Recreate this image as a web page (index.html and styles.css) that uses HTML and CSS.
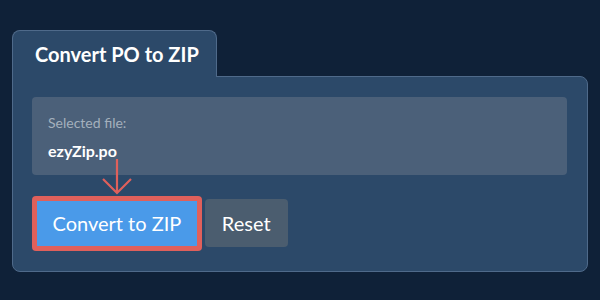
FILE: index.html
```html
<!DOCTYPE html>
<html>
<head>
<meta charset="utf-8">
<link rel="stylesheet" href="styles.css">
</head>
<body>
<div class="card">
  <div class="tab"><h1 class="tab-title">Convert PO to ZIP</h1></div>
  <div class="panel">
    <div class="file-box">
      <div class="file-label">Selected file:</div>
      <div class="file-name">ezyZip.po</div>
    </div>
    <div class="actions">
      <div class="highlight"><button class="btn btn-primary">Convert to ZIP</button></div>
      <button class="btn btn-secondary">Reset</button>
    </div>
    <svg class="arrow" width="32" height="38" viewBox="0 0 32 38">
      <path d="M16 1 V34 M2 21 L16 35 L30 21" fill="none" stroke="#e0605b" stroke-width="2.2"/>
    </svg>
  </div>
</div>
</body>
</html>
```

FILE: styles.css
```css
html, body {
  margin: 0;
  background: #0f2138;
}
body {
  padding: 30px 12px 0 12px;
  font-family: Lato, "Noto Sans", sans-serif;
}
.card {
  width: 576px;
}
.tab {
  position: relative;
  z-index: 1;
  box-sizing: border-box;
  width: 205px;
  height: 47px;
  margin-bottom: -1px;
  background: #2c4969;
  border: 1px solid #4f6a8a;
  border-bottom: none;
  border-radius: 8px 8px 0 0;
}
.tab-title {
  margin: 0;
  padding: 11px 0 0 22px;
  font-size: 20px;
  font-weight: 700;
  color: #ffffff;
  line-height: 1.2;
}
.panel {
  position: relative;
  background: #2c4969;
  border: 1px solid #4f6a8a;
  border-radius: 0 8px 8px 8px;
  padding: 20px 20px 20px 19px;
}
.file-box {
  background: #4b6079;
  border-radius: 4px;
  padding: 18px 16px 15px 16px;
}
.file-label {
  font-size: 14px;
  line-height: 1.2;
  color: #a4b0bd;
}
.file-name {
  margin-top: 9px;
  font-size: 16px;
  line-height: 1.2;
  font-weight: 700;
  color: #ffffff;
}
.actions {
  display: flex;
  align-items: center;
  gap: 3px;
  margin-top: 21px;
}
.highlight {
  background: #e0605b;
  padding: 5px;
  border-radius: 4px;
  display: flex;
}
.btn {
  font-family: Lato, "Noto Sans", sans-serif;
  font-size: 20px;
  color: #ffffff;
  border: none;
  padding: 0 17px;
  margin: 0;
  white-space: nowrap;
  display: flex;
  align-items: center;
  justify-content: center;
}
.btn-primary {
  background: #4a9ae9;
  height: 45px;
  padding: 0 15.5px;
}
.btn-secondary {
  background: #4b5d6f;
  height: 48px;
  border-radius: 4px;
}
.arrow {
  position: absolute;
  left: 88px;
  top: 81px;
}
```
